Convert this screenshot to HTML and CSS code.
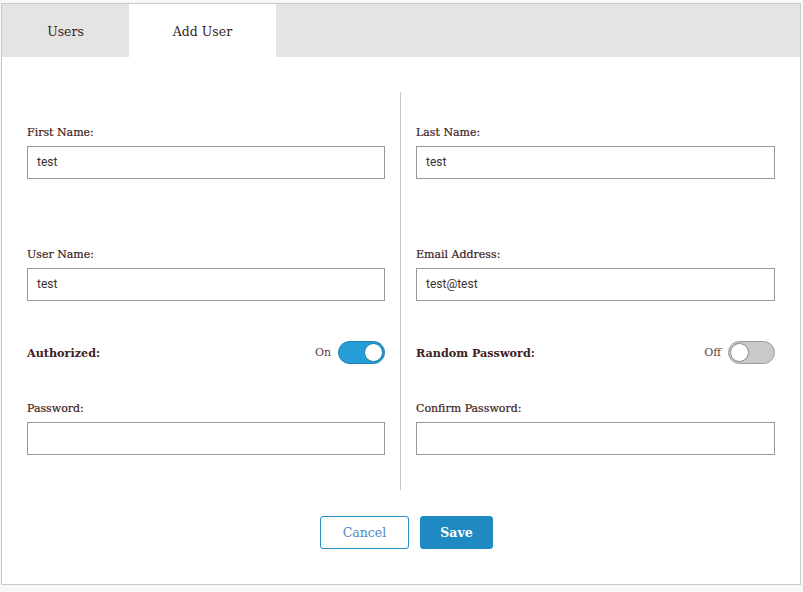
FILE: index.html
```html
<!DOCTYPE html>
<html>
<head>
<meta charset="utf-8">
<link rel="stylesheet" href="styles.css">
</head>
<body>
<div class="panel">
  <div class="tabs">
    <div class="tab">Users</div>
    <div class="tab active">Add User</div>
  </div>
  <div class="content">
    <div class="columns">
      <div class="col">
        <div class="field first">
          <div class="label">First Name:</div>
          <div class="input">test</div>
        </div>
        <div class="field second">
          <div class="label">User Name:</div>
          <div class="input">test</div>
        </div>
        <div class="toggle-row">
          <div class="toggle-label">Authorized:</div>
          <div class="toggle-wrap">
            <span class="state">On</span>
            <span class="switch on"><span class="knob"></span></span>
          </div>
        </div>
        <div class="field pw">
          <div class="label">Password:</div>
          <div class="input"></div>
        </div>
      </div>
      <div class="divider"></div>
      <div class="col">
        <div class="field first">
          <div class="label">Last Name:</div>
          <div class="input">test</div>
        </div>
        <div class="field second">
          <div class="label">Email Address:</div>
          <div class="input">test@test</div>
        </div>
        <div class="toggle-row">
          <div class="toggle-label">Random Password:</div>
          <div class="toggle-wrap">
            <span class="state">Off</span>
            <span class="switch off"><span class="knob"></span></span>
          </div>
        </div>
        <div class="field pw">
          <div class="label">Confirm Password:</div>
          <div class="input"></div>
        </div>
      </div>
    </div>
    <div class="actions">
      <button class="btn cancel">Cancel</button>
      <button class="btn save">Save</button>
    </div>
  </div>
</div>
</body>
</html>
```
FILE: styles.css
```css
html, body {
  margin: 0;
  padding: 0;
  background: #f8f8f8;
}
body {
  font-family: "DejaVu Serif", serif;
  color: #3e2222;
  padding: 3px 0 0 1px;
}
.panel {
  width: 798px;
  height: 580px;
  border: 1px solid #c8c8c8;
  background: #ffffff;
  display: flex;
  flex-direction: column;
}
.tabs {
  display: flex;
  height: 53px;
  background: #e3e4e3;
}
.tab {
  width: 127px;
  display: flex;
  align-items: center;
  justify-content: center;
  font-size: 12.5px;
  color: #3a1e1e;
  padding-top: 1px;
}
.tab.active {
  width: 147px;
  background: #ffffff;
}
.content {
  flex: 1;
  display: flex;
  flex-direction: column;
  padding: 35px 24px 0 25px;
}
.columns {
  display: flex;
  gap: 15px;
}
.col {
  width: 358px;
  padding-top: 32px;
  padding-bottom: 35px;
}
.col + .divider + .col {
  width: 359px;
}
.divider {
  width: 1px;
  background: #c8c8c8;
}
.label {
  font-size: 11px;
  line-height: 14px;
  height: 14px;
  padding-top: 2px;
  margin-bottom: 6px;
  color: #3e2222;
  -webkit-text-stroke: 0.2px #3e2222;
}
.input {
  height: 31px;
  border: 1px solid #989898;
  font-family: "Roboto", sans-serif;
  font-size: 12px;
  line-height: 31px;
  padding-left: 9px;
  color: #3a3030;
}
.field.second {
  margin-top: 67px;
}
.toggle-row {
  margin-top: 40px;
  height: 23px;
  display: flex;
  align-items: center;
  justify-content: space-between;
}
.toggle-label {
  font-size: 11.2px;
  font-weight: bold;
  color: #3e2222;
}
.toggle-wrap {
  display: flex;
  align-items: center;
  gap: 7px;
}
.state {
  font-size: 11px;
  color: #5a3a3a;
}
.switch {
  width: 47px;
  height: 23px;
  box-sizing: border-box;
  border-radius: 12px;
  display: flex;
  align-items: center;
  padding: 0 1px;
}
.switch.on {
  background: #259dd6;
  border: 1px solid #1f7fb0;
  justify-content: flex-end;
}
.switch.off {
  background: #c9c9c9;
  border: 1px solid #9a9a9a;
  justify-content: flex-start;
}
.knob {
  width: 19px;
  height: 19px;
  border-radius: 50%;
  background: #ffffff;
  box-sizing: border-box;
}
.switch.on .knob {
  border: 1px solid #1f7fb0;
}
.switch.off .knob {
  border: 1px solid #8a8a8a;
}
.field.pw {
  margin-top: 36px;
}
.actions {
  display: flex;
  justify-content: center;
  gap: 11px;
  padding-left: 10px;
  margin-top: 26px;
}
.btn {
  height: 33px;
  border-radius: 3px;
  font-family: "DejaVu Serif", serif;
  font-size: 12.5px;
  cursor: pointer;
}
.btn.cancel {
  width: 89px;
  background: #ffffff;
  border: 1px solid #2a8cc4;
  color: #4f86c6;
}
.btn.save {
  width: 73px;
  background: #1f8ac2;
  border: 1px solid #1f8ac2;
  color: #ffffff;
  font-weight: bold;
}
```
